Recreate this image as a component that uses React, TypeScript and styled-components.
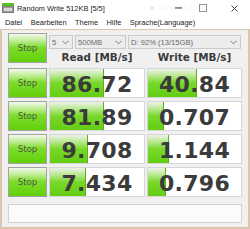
import React from "react";
import styled, { createGlobalStyle } from "styled-components";

const Global = createGlobalStyle`
  html, body { margin: 0; padding: 0; background: #ffffff; }
  body {
    width: 250px;
    height: 229px;
    overflow: hidden;
    font-family: "Liberation Sans", Arial, sans-serif;
  }
`;

const Window = styled.div`
  position: relative;
  width: 250px;
  height: 229px;
  display: flex;
  flex-direction: column;
  background: #ffffff;
  overflow: hidden;
`;

const TitleBar = styled.div`
  height: 16px;
  display: flex;
  align-items: center;
  padding-left: 2px;
  gap: 3px;
  color: #1a1a1a;
  font-size: 7.4px;
`;

const TitleText = styled.span`
  flex: 1;
  white-space: nowrap;
`;

const Controls = styled.div`
  display: flex;
  align-items: center;
  height: 16px;
`;

const CtrlBox = styled.div<{ $w: number }>`
  width: ${(p) => p.$w}px;
  height: 16px;
  display: flex;
  align-items: center;
  justify-content: center;
`;

const Ghost = styled.div`
  position: absolute;
  left: 150px;
  top: 3px;
  display: flex;
  align-items: center;
  gap: 5px;
  font-size: 8px;
  color: rgba(0, 0, 0, 0.09);
  pointer-events: none;
`;

const GhostDot = styled.span`
  width: 4px;
  height: 4px;
  border-radius: 50%;
  background: rgba(230, 60, 120, 0.2);
`;

const MenuBar = styled.div`
  height: 13px;
  display: flex;
  align-items: center;
  padding-left: 5px;
  gap: 8.5px;
  font-size: 7.4px;
  color: #1a1a1a;
  background: #ffffff;
`;

const MenuItem = styled.span`
  white-space: nowrap;
`;

const Client = styled.div`
  flex: 1;
  background: #f0f0f0;
  border: 2px solid #dac6ad;
  border-top-width: 1px;
  padding: 3px 6px 0 6px;
  display: flex;
  flex-direction: column;
`;

const TopArea = styled.div`
  display: grid;
  grid-template-columns: 39px 1fr;
  column-gap: 2px;
  height: 30px;
`;

const StopButton = styled.div`
  height: 30px;
  box-sizing: border-box;
  border: 1px solid #a3a3a3;
  background: linear-gradient(
    to bottom,
    #f2f7ee 0%,
    #c4ee9c 22%,
    #7ddc2c 48%,
    #62d00a 100%
  );
  display: flex;
  align-items: center;
  justify-content: center;
  font-family: "DejaVu Sans", sans-serif;
  font-size: 8.6px;
  color: #4d5a40;
`;

const TopRight = styled.div`
  display: flex;
  flex-direction: column;
`;

const ComboRow = styled.div`
  margin-top: 2px;
  height: 14px;
  display: flex;
  gap: 2px;
`;

const Combo = styled.div<{ $w: number }>`
  width: ${(p) => p.$w}px;
  box-sizing: border-box;
  height: 14px;
  border: 1px solid #cbcbcb;
  background: #ececec;
  display: flex;
  align-items: center;
  justify-content: space-between;
  padding: 0 3px 0 2px;
  font-size: 7.6px;
  color: #6a6a6a;
  white-space: nowrap;
`;

const HeaderRow = styled.div`
  display: grid;
  grid-template-columns: 96px 95px;
  column-gap: 2px;
  height: 14px;
`;

const Header = styled.div`
  display: flex;
  align-items: center;
  justify-content: center;
  font-family: "DejaVu Sans", sans-serif;
  font-weight: bold;
  font-size: 10.4px;
  color: #3a3a3a;
  white-space: nowrap;
  padding-top: 2px;
`;

const DataRow = styled.div<{ $first?: boolean }>`
  display: grid;
  grid-template-columns: 39px 96px 95px;
  column-gap: 2px;
  height: 30px;
  margin-top: ${(p) => (p.$first ? 5 : 3)}px;
`;

const ValueCell = styled.div`
  position: relative;
  box-sizing: border-box;
  height: 30px;
  border: 1px solid #d6d6d6;
  background: #ffffff;
  overflow: hidden;
`;

const Bar = styled.div`
  position: absolute;
  left: 0;
  top: 0;
  bottom: 0;
  background: linear-gradient(
    to bottom,
    #eef2ea 0%,
    #b9e891 24%,
    #78d82a 50%,
    #64cd12 100%
  );
  border-right: 1px solid #5fae22;
`;

const ValueText = styled.div`
  position: relative;
  height: 100%;
  display: flex;
  align-items: center;
  justify-content: center;
  padding-top: 2px;
  box-sizing: border-box;
  font-family: "DejaVu Sans", sans-serif;
  font-weight: bold;
  font-size: 22px;
  letter-spacing: 0.3px;
  color: #3b3b3b;
`;

const StatusBox = styled.div`
  margin-top: 7px;
  height: 19px;
  box-sizing: border-box;
  border: 1px solid #d2d2d2;
  background: #fbfbfb;
`;

const AppIcon = () => (
  <svg width="12" height="10" viewBox="0 0 12 10">
    <rect x="0" y="0" width="12" height="10" fill="#7a7a7a" />
    <rect x="0" y="0" width="12" height="3" fill="#58c020" />
    <rect x="1" y="4" width="10" height="5" fill="#9a9a9a" />
    <rect x="2" y="5" width="8" height="3" fill="#d8d8d8" />
  </svg>
);

type Row = { read: string; write: string; rw: number; ww: number };

const rows: Row[] = [
  { read: "86.72", write: "40.84", rw: 56, ww: 52 },
  { read: "81.89", write: "0.707", rw: 56, ww: 16 },
  { read: "9.708", write: "1.144", rw: 39, ww: 21 },
  { read: "7.434", write: "0.796", rw: 37, ww: 18 },
];

const Chevron = () => (
  <svg width="7" height="5" viewBox="0 0 7 5">
    <polyline points="0.5,0.8 3.5,3.8 6.5,0.8" fill="none" stroke="#707070" strokeWidth="0.9" />
  </svg>
);

export default function App() {
  return (
    <>
      <Global />
      <Window>
        <TitleBar>
          <AppIcon />
          <TitleText>Random Write 512KB [5/5]</TitleText>
          <Controls>
            <CtrlBox $w={20}>
              <svg width="7" height="2" viewBox="0 0 7 2">
                <rect x="0" y="0.5" width="7" height="0.9" fill="#222" />
              </svg>
            </CtrlBox>
            <CtrlBox $w={30}>
              <svg width="8" height="8" viewBox="0 0 8 8">
                <rect x="0.5" y="0.5" width="7" height="7" fill="none" stroke="#888" strokeWidth="0.9" />
              </svg>
            </CtrlBox>
            <CtrlBox $w={32}>
              <svg width="7" height="7" viewBox="0 0 7 7">
                <path d="M0.5 0.5 L6.5 6.5 M6.5 0.5 L0.5 6.5" stroke="#333" strokeWidth="0.9" />
              </svg>
            </CtrlBox>
          </Controls>
        </TitleBar>
        <Ghost>
          <GhostDot />
          <span>Window Snip</span>
        </Ghost>
        <MenuBar>
          <MenuItem>Datei</MenuItem>
          <MenuItem>Bearbeiten</MenuItem>
          <MenuItem>Theme</MenuItem>
          <MenuItem>Hilfe</MenuItem>
          <MenuItem>Sprache(Language)</MenuItem>
        </MenuBar>
        <Client>
          <TopArea>
            <StopButton>Stop</StopButton>
            <TopRight>
              <ComboRow>
                <Combo $w={24}>
                  <span>5</span>
                  <Chevron />
                </Combo>
                <Combo $w={51}>
                  <span>500MB</span>
                  <Chevron />
                </Combo>
                <Combo $w={113}>
                  <span>D: 92% (13/15GB)</span>
                  <Chevron />
                </Combo>
              </ComboRow>
              <HeaderRow>
                <Header>Read [MB/s]</Header>
                <Header>Write [MB/s]</Header>
              </HeaderRow>
            </TopRight>
          </TopArea>
          {rows.map((r, i) => (
            <DataRow key={i} $first={i === 0}>
              <StopButton>Stop</StopButton>
              <ValueCell>
                <Bar style={{ width: `${r.rw}%` }} />
                <ValueText>{r.read}</ValueText>
              </ValueCell>
              <ValueCell>
                <Bar style={{ width: `${r.ww}%` }} />
                <ValueText>{r.write}</ValueText>
              </ValueCell>
            </DataRow>
          ))}
          <StatusBox />
        </Client>
      </Window>
    </>
  );
}
